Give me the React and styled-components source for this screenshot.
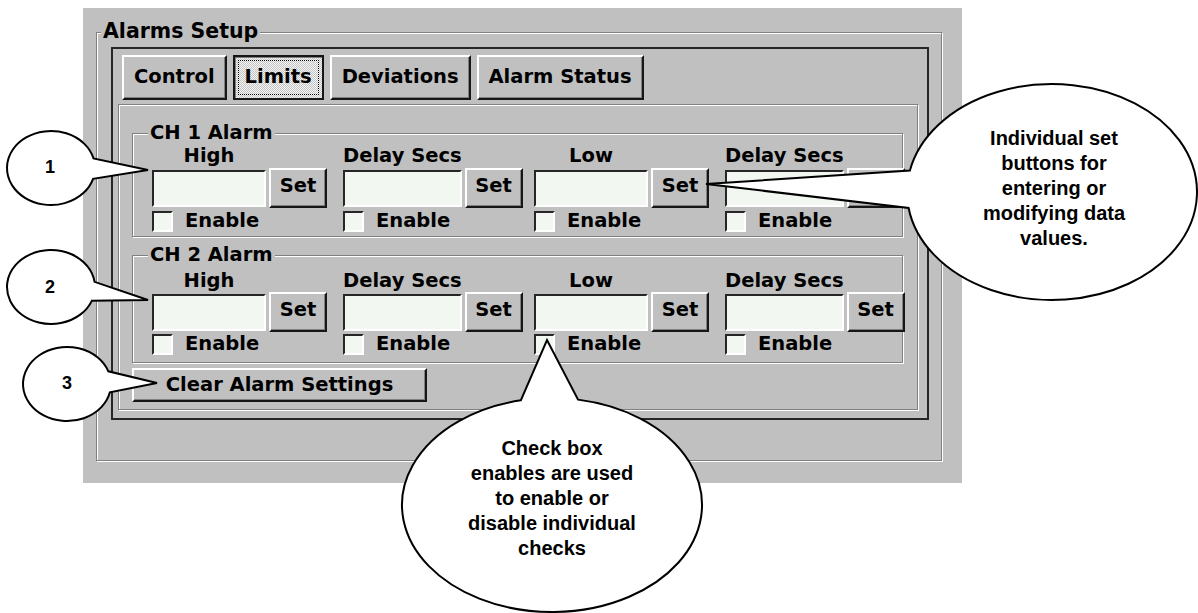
import React from 'react';
import styled, { createGlobalStyle, css } from 'styled-components';

const GlobalStyle = createGlobalStyle`
  html, body {
    margin: 0;
    padding: 0;
    background: #ffffff;
  }
  *, *::before, *::after {
    box-sizing: border-box;
  }
`;

// classic 3D edges
const etched = css`
  border: 1px solid #808080;
  box-shadow: inset 1px 1px 0 #ffffff, 1px 1px 0 #ffffff;
`;

const raised = css`
  border: 2px solid;
  border-color: #ffffff #161616 #161616 #ffffff;
  box-shadow: inset -1px -1px 0 #808080;
  background: #c0c0c0;
`;

const sunken = css`
  border: 2px solid;
  border-color: #262626 #ffffff #ffffff #262626;
  background: #f2f7f2;
`;

const Page = styled.div`
  position: relative;
  width: 1198px;
  height: 613px;
  overflow: hidden;
  padding: 8px 0 0 83px;
  background: #ffffff;
`;

const Window = styled.div`
  width: 879px;
  height: 475px;
  background: #c0c0c0;
  padding: 24px 20px 22px 13px;
  display: flex;
  flex-direction: column;
  font-family: 'DejaVu Sans', Verdana, sans-serif;
  font-weight: bold;
  font-size: 19.5px;
  line-height: 22px;
  color: #000000;
`;

const GroupBox = styled.div`
  position: relative;
  ${etched}
  padding: ${(props) => props.$pad};
`;

const SetupGroup = styled(GroupBox)`
  flex: 1;
  display: flex;
  flex-direction: column;
`;

const Legend = styled.span`
  position: absolute;
  top: ${(props) => props.$top}px;
  left: ${(props) => props.$left}px;
  padding: 0 2px;
  font-size: ${(props) => props.$size || 19.5}px;
  line-height: 18px;
  background: #c0c0c0;
  white-space: nowrap;
`;

const TabFrame = styled.div`
  flex: 1;
  display: flex;
  flex-direction: column;
  border: 2px solid #262626;
  padding: 6px 9px 8px 5px;
`;

const TabRow = styled.div`
  display: flex;
  gap: 6px;
  height: 45px;
  margin-left: 4px;
`;

const Tab = styled.button`
  ${raised}
  display: flex;
  align-items: stretch;
  padding: 0 10px 2px;
  font: inherit;
  color: inherit;
  cursor: default;

  ${(props) =>
    props.$active &&
    css`
      border-color: #161616;
      box-shadow: inset 1px 1px 0 #808080;
      background: repeating-conic-gradient(#f4f4f4 0% 25%, #c4c4c4 0% 50%) 0 0 / 2px 2px;
      padding: 3px;
    `}
`;

const TabText = styled.span`
  display: flex;
  align-items: center;
  justify-content: center;
  flex: 1;
  padding: ${(props) => (props.$focus ? '0 6px 2px' : '0')};
  border: ${(props) => (props.$focus ? '1px dotted #000' : 'none')};
`;

const TabPage = styled.div`
  ${etched}
  flex: 1;
  margin-top: 4px;
  padding: 28px 14px 0 13px;
  display: flex;
  flex-direction: column;
`;

const Columns = styled.div`
  display: grid;
  grid-template-columns: repeat(4, 175px);
  column-gap: 16px;
`;

const Column = styled.div`
  display: grid;
  grid-template-columns: 1fr 58px;
  column-gap: 3px;
  align-items: center;
`;

const ColLabel = styled.div`
  position: relative;
  z-index: 1;
  grid-column: 1;
  justify-self: center;
  height: 20px;
  line-height: 20px;
  margin-bottom: ${(props) => props.$gap}px;
  white-space: nowrap;
`;

const Field = styled.input`
  ${sunken}
  grid-column: 1;
  width: 100%;
  height: 37px;
  margin: 0;
  padding: 0 4px;
  font: inherit;
  outline: none;
`;

const SetButton = styled.button`
  ${raised}
  grid-column: 2;
  height: 40px;
  padding: 0 0 4px;
  font: inherit;
  color: inherit;
  cursor: default;
`;

const CheckRow = styled.label`
  grid-column: 1 / -1;
  display: flex;
  align-items: center;
  gap: 12px;
  height: 22px;
  margin-top: ${(props) => props.$gap}px;
`;

const CheckBox = styled.input.attrs({ type: 'checkbox' })`
  appearance: none;
  ${sunken}
  width: 21px;
  height: 21px;
  margin: 0;
`;

const ChannelBox = styled(GroupBox)`
  margin-bottom: ${(props) => props.$after}px;
`;

const ClearButton = styled.button`
  ${raised}
  align-self: flex-start;
  width: 295px;
  height: 34px;
  margin-top: 5px;
  padding: 0 0 1px;
  font: inherit;
  color: inherit;
  cursor: default;
`;

// annotation layer
const Overlay = styled.svg`
  position: absolute;
  top: 0;
  left: 0;
  width: 1198px;
  height: 613px;
  pointer-events: none;
`;

const CalloutText = styled.div`
  position: absolute;
  left: ${(props) => props.$cx - props.$w / 2}px;
  top: ${(props) => props.$top}px;
  width: ${(props) => props.$w}px;
  text-align: center;
  font-family: 'Liberation Sans', Arial, sans-serif;
  font-weight: bold;
  font-size: 20px;
  line-height: 25px;
  color: #000;
`;

const NumLabel = styled.div`
  position: absolute;
  left: ${(props) => props.$x - 20}px;
  top: ${(props) => props.$y - 11}px;
  width: 40px;
  text-align: center;
  font-family: 'Liberation Sans', Arial, sans-serif;
  font-weight: bold;
  font-size: 18px;
  line-height: 22px;
  color: #000;
`;

const COLUMN_LABELS = ['High', 'Delay Secs', 'Low', 'Delay Secs'];

const TABS = ['Control', 'Limits', 'Deviations', 'Alarm Status'];

const CALLOUTS = [
  { cx: 51, cy: 168, rx: 44, ry: 37, a1: -15, a2: 17, tip: [148, 170] },
  { cx: 51, cy: 287, rx: 44, ry: 37, a1: -8, a2: 22, tip: [148, 300] },
  { cx: 67, cy: 384, rx: 44, ry: 37, a1: -20, a2: 13, tip: [157, 383] },
  { cx: 1052, cy: 192, rx: 145, ry: 108, a1: 191.5, a2: 171.5, tip: [706, 184] },
  { cx: 552, cy: 505, rx: 150, ry: 107, a1: -102, a2: -80, tip: [547, 340] },
];

const onEllipse = (cx, cy, rx, ry, deg) => {
  const r = (deg * Math.PI) / 180;
  return [cx + rx * Math.cos(r), cy + ry * Math.sin(r)];
};

const calloutPath = ({ cx, cy, rx, ry, a1, a2, tip }) => {
  const [x1, y1] = onEllipse(cx, cy, rx, ry, a1);
  const [x2, y2] = onEllipse(cx, cy, rx, ry, a2);
  const diff = (((a2 - a1) % 360) + 360) % 360;
  const sweep = diff > 180 ? 1 : 0;
  return `M ${x1} ${y1} A ${rx} ${ry} 0 1 ${sweep} ${x2} ${y2} L ${tip[0]} ${tip[1]} Z`;
};

const ChannelGroup = ({ title, pad, labelGap, checkGap, after }) => (
  <ChannelBox $pad={pad} $after={after}>
    <Legend $top={-10} $left={15}>
      {title}
    </Legend>
    <Columns>
      {COLUMN_LABELS.map((label, i) => (
        <Column key={i}>
          <ColLabel $gap={labelGap}>{label}</ColLabel>
          <Field type="text" />
          <SetButton>Set</SetButton>
          <CheckRow $gap={checkGap}>
            <CheckBox />
            <span>Enable</span>
          </CheckRow>
        </Column>
      ))}
    </Columns>
  </ChannelBox>
);

const App = () => (
  <>
    <GlobalStyle />
    <Page>
      <Window>
        <SetupGroup $pad="14px 12px 40px 14px">
          <Legend $top={-11} $left={4} $size={20.5}>
            Alarms Setup
          </Legend>
          <TabFrame>
            <TabRow>
              {TABS.map((tab) => (
                <Tab key={tab} $active={tab === 'Limits'}>
                  <TabText $focus={tab === 'Limits'}>{tab}</TabText>
                </Tab>
              ))}
            </TabRow>
            <TabPage>
              <ChannelGroup title="CH 1 Alarm" pad="12px 0 4px 19px" labelGap={2} checkGap={2} after={18} />
              <ChannelGroup title="CH 2 Alarm" pad="15px 0 7px 19px" labelGap={1} checkGap={1} after={0} />
              <ClearButton>Clear Alarm Settings</ClearButton>
            </TabPage>
          </TabFrame>
        </SetupGroup>
      </Window>

      <Overlay viewBox="0 0 1198 613">
        {CALLOUTS.map((c, i) => (
          <path
            key={i}
            d={calloutPath(c)}
            fill="#ffffff"
            stroke="#000000"
            strokeWidth="2"
            strokeLinejoin="miter"
          />
        ))}
      </Overlay>

      <NumLabel $x={50} $y={167}>1</NumLabel>
      <NumLabel $x={50} $y={287}>2</NumLabel>
      <NumLabel $x={67} $y={383}>3</NumLabel>

      <CalloutText $cx={1054} $top={126} $w={200}>
        Individual set
        <br />
        buttons for
        <br />
        entering or
        <br />
        modifying data
        <br />
        values.
      </CalloutText>

      <CalloutText $cx={552} $top={436} $w={220}>
        Check box
        <br />
        enables are used
        <br />
        to enable or
        <br />
        disable individual
        <br />
        checks
      </CalloutText>
    </Page>
  </>
);

export default App;
